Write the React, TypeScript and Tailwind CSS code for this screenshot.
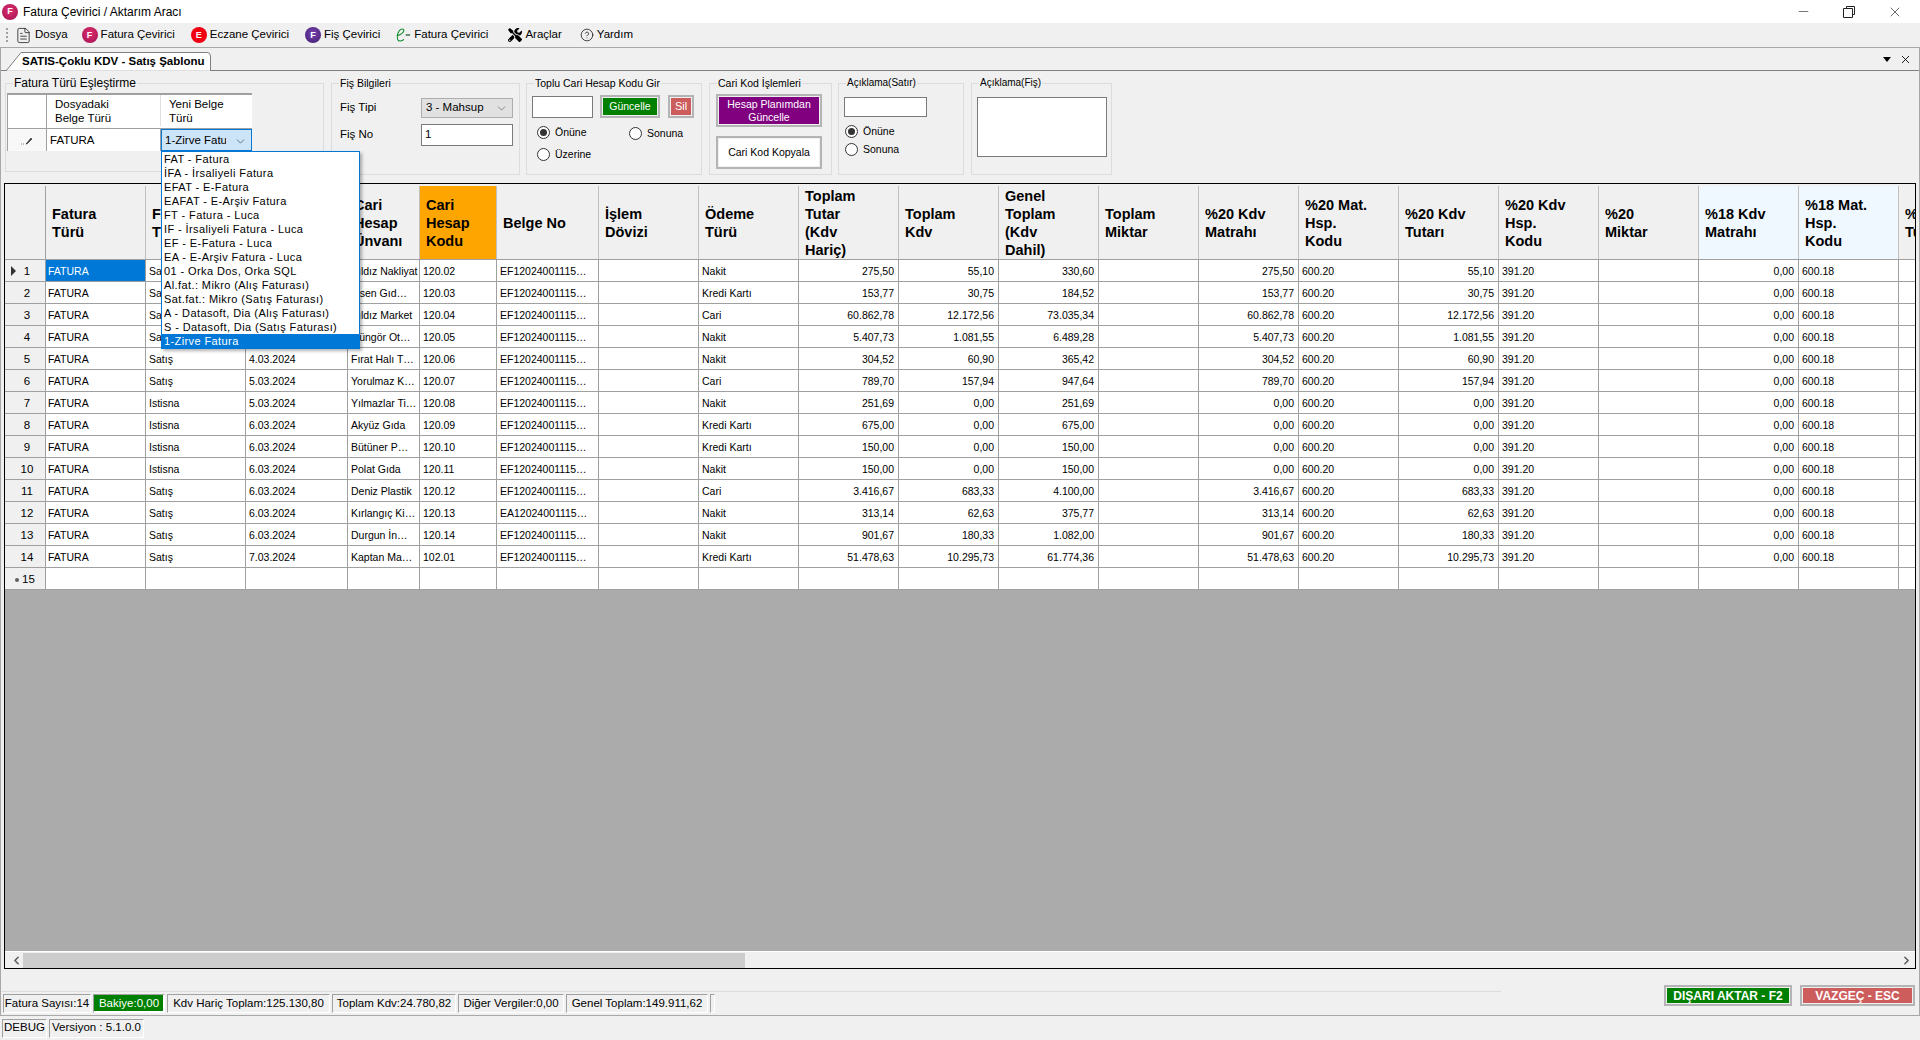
import React from "react";
import { FileText, CircleHelp, ChevronDown, ChevronLeft, ChevronRight, Minus, X } from "lucide-react";
import { FaTools } from "react-icons/fa";

const comboItems = [
  "FAT - Fatura",
  "İFA - İrsaliyeli Fatura",
  "EFAT - E-Fatura",
  "EAFAT - E-Arşiv Fatura",
  "FT - Fatura - Luca",
  "IF - İrsaliyeli Fatura - Luca",
  "EF - E-Fatura - Luca",
  "EA - E-Arşiv Fatura - Luca",
  "01 - Orka Dos, Orka SQL",
  "Al.fat.: Mikro (Alış Faturası)",
  "Sat.fat.: Mikro (Satış Faturası)",
  "A - Datasoft, Dia (Alış Faturası)",
  "S - Datasoft, Dia (Satış Faturası)",
  "1-Zirve Fatura",
];

const columns = [
  { w: "w-[100px]", title: ["Fatura", "Türü"] },
  { w: "w-[100px]", title: ["Fatura", "Tipi"] },
  { w: "w-[102px]", title: ["Fatura", "Tarihi"] },
  { w: "w-[72px]", title: ["Cari", "Hesap", "Ünvanı"] },
  { w: "w-[77px]", title: ["Cari", "Hesap", "Kodu"], bg: "bg-[#ffa500]" },
  { w: "w-[102px]", title: ["Belge No"] },
  { w: "w-[100px]", title: ["İşlem", "Dövizi"] },
  { w: "w-[100px]", title: ["Ödeme", "Türü"] },
  { w: "w-[100px]", title: ["Toplam", "Tutar", "(Kdv", "Hariç)"] },
  { w: "w-[100px]", title: ["Toplam", "Kdv"] },
  { w: "w-[100px]", title: ["Genel", "Toplam", "(Kdv", "Dahil)"] },
  { w: "w-[100px]", title: ["Toplam", "Miktar"] },
  { w: "w-[100px]", title: ["%20 Kdv", "Matrahı"] },
  { w: "w-[100px]", title: ["%20 Mat.", "Hsp.", "Kodu"] },
  { w: "w-[100px]", title: ["%20 Kdv", "Tutarı"] },
  { w: "w-[100px]", title: ["%20 Kdv", "Hsp.", "Kodu"] },
  { w: "w-[100px]", title: ["%20", "Miktar"] },
  { w: "w-[100px]", title: ["%18 Kdv", "Matrahı"], bg: "bg-[#f0f8ff]" },
  { w: "w-[100px]", title: ["%18 Mat.", "Hsp.", "Kodu"], bg: "bg-[#f0f8ff]" },
  { w: "w-[100px]", title: ["%18 Kdv", "Tutarı"] },
];

// tip, tarih, unvan, kod, belge, odeme, tutar, kdv, genel, matrah
const rows = [
  ["Satış", "1.03.2024", "Yıldız Nakliyat", "120.02", "EF12024001115…", "Nakit", "275,50", "55,10", "330,60", "275,50"],
  ["Satış", "1.03.2024", "Ihsen Gıd…", "120.03", "EF12024001115…", "Kredi Kartı", "153,77", "30,75", "184,52", "153,77"],
  ["Satış", "2.03.2024", "Yıldız Market", "120.04", "EF12024001115…", "Cari", "60.862,78", "12.172,56", "73.035,34", "60.862,78"],
  ["Satış", "4.03.2024", "Güngör Ot…", "120.05", "EF12024001115…", "Nakit", "5.407,73", "1.081,55", "6.489,28", "5.407,73"],
  ["Satış", "4.03.2024", "Fırat Halı T…", "120.06", "EF12024001115…", "Nakit", "304,52", "60,90", "365,42", "304,52"],
  ["Satış", "5.03.2024", "Yorulmaz K…", "120.07", "EF12024001115…", "Cari", "789,70", "157,94", "947,64", "789,70"],
  ["Istisna", "5.03.2024", "Yılmazlar Ti…", "120.08", "EF12024001115…", "Nakit", "251,69", "0,00", "251,69", "0,00"],
  ["Istisna", "6.03.2024", "Akyüz Gıda", "120.09", "EF12024001115…", "Kredi Kartı", "675,00", "0,00", "675,00", "0,00"],
  ["Istisna", "6.03.2024", "Bütüner P…", "120.10", "EF12024001115…", "Kredi Kartı", "150,00", "0,00", "150,00", "0,00"],
  ["Istisna", "6.03.2024", "Polat Gıda", "120.11", "EF12024001115…", "Nakit", "150,00", "0,00", "150,00", "0,00"],
  ["Satış", "6.03.2024", "Deniz Plastik", "120.12", "EF12024001115…", "Cari", "3.416,67", "683,33", "4.100,00", "3.416,67"],
  ["Satış", "6.03.2024", "Kırlangıç Ki…", "120.13", "EA12024001115…", "Nakit", "313,14", "62,63", "375,77", "313,14"],
  ["Satış", "6.03.2024", "Durgun İn…", "120.14", "EF12024001115…", "Nakit", "901,67", "180,33", "1.082,00", "901,67"],
  ["Satış", "7.03.2024", "Kaptan Ma…", "102.01", "EF12024001115…", "Kredi Kartı", "51.478,63", "10.295,73", "61.774,36", "51.478,63"],
];

function Badge({ letter, color }: { letter: string; color: string }) {
  return (
    <span className={`flex h-[16px] w-[16px] items-center justify-center rounded-full text-[9px] font-bold leading-none text-white ${color}`}>
      {letter}
    </span>
  );
}

function MenuItem({ icon, label, className }: { icon: React.ReactNode; label: string; className: string }) {
  return (
    <div className={`flex items-center ${className}`}>
      {icon}
      <span className="ml-[3px]">{label}</span>
    </div>
  );
}

function Radio({ label, checked, className = "" }: { label: string; checked?: boolean; className?: string }) {
  return (
    <div className={`flex items-center gap-[5px] text-[10.5px] ${className}`}>
      <span className="flex h-[13px] w-[13px] items-center justify-center rounded-full border border-[#333333] bg-white">
        {checked && <span className="h-[7px] w-[7px] rounded-full bg-[#333333]" />}
      </span>
      {label}
    </div>
  );
}

function Group({ title, className, legend = "", inner, children }: { title: string; className: string; legend?: string; inner: string; children: React.ReactNode }) {
  return (
    <fieldset className={`border border-[#dcdcdc] ${className}`}>
      <legend className={`ml-[7px] px-[1px] leading-[14px] ${legend || "text-[10.5px]"}`}>{title}</legend>
      <div className={inner}>{children}</div>
    </fieldset>
  );
}

function FlatButton({ fill, className, children }: { fill: string; className: string; children: React.ReactNode }) {
  return (
    <div className={`border-2 border-[#b4b4b4] p-[1px] ${className}`}>
      <div className={`flex h-full items-center justify-center text-center ${fill}`}>{children}</div>
    </div>
  );
}

function StatusItem({ className = "", children }: { className?: string; children?: React.ReactNode }) {
  return (
    <div className={`flex h-[19px] items-center justify-center whitespace-nowrap border border-[#ffffff] border-l-[#a0a0a0] border-t-[#a0a0a0] text-[11.5px] ${className}`}>
      {children}
    </div>
  );
}

function TopSection() {
  return (
    <div className="flex h-[112px] items-start pl-[4px] pt-[5px]">
      <Group title="Fatura Türü Eşleştirme" legend="text-[12px] -ml-[1px]" className="h-[96px] w-[319px]" inner="pl-[1px]">
        <div className="mt-[3px] w-[245px] border-l border-t-2 border-[#a0a0a0] text-[11.5px]">
          <div className="flex h-[33px] bg-white pb-[2px]">
            <div className="-mb-[2px] w-[39px] border-r border-[#a0a0a0]" />
            <div className="flex w-[114px] items-center border-r border-[#e0e0e0] pl-[8px] leading-[14px]">
              Dosyadaki<br />Belge Türü
            </div>
            <div className="flex flex-1 items-center pl-[8px] leading-[14px]">
              Yeni Belge<br />Türü
            </div>
          </div>
          <div className="flex h-[23px] border-t border-[#a0a0a0]">
            <div className="flex w-[39px] items-center justify-center border-r border-[#a0a0a0] bg-[#f8f8f8]">
              <svg width="12" height="9" viewBox="0 0 12 9" className="text-[#333333]">
                <path d="M0 8h1M2 8h1M5 8 L10 2 L11 3 L6 8 Z" fill="currentColor" stroke="currentColor" strokeWidth="0.6" />
              </svg>
            </div>
            <div className="flex w-[114px] items-center border-r border-[#a0a0a0] bg-white pl-[3px] pt-[2px]">FATURA</div>
            <div className="flex flex-1 items-center justify-between border border-[#0078d7] bg-[#cce4f7] pl-[3px] pr-[4px] pt-[2px]">
              <span className="w-[61px] overflow-hidden whitespace-nowrap">1-Zirve Fatura</span>
              <ChevronDown size={13} strokeWidth={1.2} className="text-[#333333]" />
            </div>
          </div>
        </div>
      </Group>

      <Group title="Fiş Bilgileri" className="ml-[7px] h-[99px] w-[189px]" inner="pl-[8px]">
        <div className="mt-[8px] flex h-[20px] items-center text-[11.5px]">
          <span className="w-[81px]">Fiş Tipi</span>
          <div className="flex h-[20px] w-[92px] items-center justify-between border border-[#adadad] bg-[#e1e1e1] pl-[4px] pr-[4px]">
            3 - Mahsup
            <ChevronDown size={13} strokeWidth={1.2} className="text-[#555555]" />
          </div>
        </div>
        <div className="mt-[6px] flex h-[22px] items-center text-[11.5px]">
          <span className="w-[81px]">Fiş No</span>
          <div className="flex h-[22px] w-[92px] items-center border border-[#7a7a7a] bg-white pl-[3px]">1</div>
        </div>
      </Group>

      <Group title="Toplu Cari Hesap Kodu Gir" className="ml-[6px] h-[99px] w-[176px]" inner="pl-[5px]">
        <div className="mt-[5px] flex items-center">
          <div className="h-[22px] w-[61px] border border-[#7a7a7a] bg-white" />
          <FlatButton fill="bg-[#008000] text-white" className="ml-[7px] h-[23px] w-[60px] text-[10.5px]">Güncelle</FlatButton>
          <FlatButton fill="bg-[#cd5c5c] text-white" className="ml-[8px] h-[23px] w-[26px] text-[11px]">Sil</FlatButton>
        </div>
        <div className="mt-[6px] flex pl-[5px]">
          <Radio label="Önüne" checked className="w-[92px]" />
          <Radio label="Sonuna" className="mt-[2px]" />
        </div>
        <Radio label="Üzerine" className="ml-[5px] mt-[5px]" />
      </Group>

      <Group title="Cari Kod İşlemleri" className="ml-[7px] h-[99px] w-[123px]" inner="pl-[6px]">
        <FlatButton fill="bg-[#800080] text-white" className="mt-[4px] h-[33px] w-[106px] text-[10.5px] leading-[13px]">
          Hesap Planımdan<br />Güncelle
        </FlatButton>
        <FlatButton fill="bg-white" className="mt-[9px] h-[33px] w-[106px] text-[10.5px]">Cari Kod Kopyala</FlatButton>
      </Group>

      <Group title="Açıklama(Satır)" legend="text-[10px]" className="ml-[6px] h-[99px] w-[126px]" inner="pl-[5px]">
        <div className="mt-[7px] h-[20px] w-[83px] border border-[#7a7a7a] bg-white" />
        <Radio label="Önüne" checked className="ml-[1px] mt-[7px]" />
        <Radio label="Sonuna" className="ml-[1px] mt-[2px]" />
      </Group>

      <Group title="Açıklama(Fiş)" legend="text-[10px]" className="ml-[7px] h-[99px] w-[141px]" inner="pl-[5px]">
        <div className="mt-[7px] h-[60px] w-[130px] border border-[#7a7a7a] bg-white" />
      </Group>
    </div>
  );
}

function DataGrid() {
  return (
    <div className="mx-[3px] flex h-[786px] flex-col border border-black bg-[#ababab]">
      <div className="flex-1 overflow-hidden">
        <table className="w-[1921px] table-fixed border-separate border-spacing-0 bg-white text-[10.5px] font-normal">
          <colgroup>
            <col className="w-[41px]" />
            {columns.map((c, i) => (
              <col key={i} className={c.w} />
            ))}
          </colgroup>
          <thead>
            <tr>
              <th className="h-[76px] border-b border-[#a0a0a0] bg-[#f0f0f0] p-0 align-bottom">
                <div className="h-[73px] border-r border-[#a0a0a0]" />
              </th>
              {columns.map((c, i) => (
                <th key={i} className="h-[76px] border-b border-[#a0a0a0] bg-[#f0f0f0] p-0 align-bottom">
                  <div className={`flex h-[73px] flex-col justify-center overflow-hidden border-r border-[#c0c0c0] pl-[6px] text-left text-[14.5px] font-bold leading-[18px] ${c.bg || ""}`}>
                    {c.title.map((t, j) => (
                      <span key={j} className="whitespace-nowrap">{t}</span>
                    ))}
                  </div>
                </th>
              ))}
            </tr>
          </thead>
          <tbody>
            {rows.map((r, i) => (
              <tr key={i}>
                <td className="relative h-[22px] border-b border-r border-[#a0a0a0] bg-[#f0f0f0] p-0 pt-[2px] text-center text-[11.5px]">
                  {i === 0 && (
                    <span className="absolute left-[6px] top-[6px] h-0 w-0 border-y-[5px] border-l-[5px] border-y-transparent border-l-[#333333]" />
                  )}
                  <span className="pl-[4px]">{i + 1}</span>
                </td>
                <td className={`border-b border-r border-[#a0a0a0] px-[2px] pb-0 pt-[2px] ${i === 0 ? "bg-[#0078d7] text-white" : ""}`}>FATURA</td>
                <Cell>{r[0]}</Cell>
                <Cell>{r[1]}</Cell>
                <Cell>{r[2]}</Cell>
                <Cell>{r[3]}</Cell>
                <Cell>{r[4]}</Cell>
                <Cell />
                <Cell>{r[5]}</Cell>
                <Cell num>{r[6]}</Cell>
                <Cell num>{r[7]}</Cell>
                <Cell num>{r[8]}</Cell>
                <Cell />
                <Cell num>{r[9]}</Cell>
                <Cell>600.20</Cell>
                <Cell num>{r[7]}</Cell>
                <Cell>391.20</Cell>
                <Cell />
                <Cell num>0,00</Cell>
                <Cell>600.18</Cell>
                <Cell />
              </tr>
            ))}
            <tr>
              <td className="h-[22px] border-b border-r border-[#a0a0a0] bg-[#f0f0f0] p-0 pt-[2px] text-center text-[11.5px]">
                <span className="mr-[3px] inline-block h-[4px] w-[4px] rounded-full bg-[#606060] align-middle" />15
              </td>
              {columns.map((c, i) => (
                <Cell key={i} />
              ))}
            </tr>
          </tbody>
        </table>
      </div>
      <div className="flex h-[17px] items-center border-t border-white bg-[#f0f0f0]">
        <ChevronLeft size={13} strokeWidth={3} className="ml-[5px] w-[13px] text-[#606060]" />
        <div className="h-[15px] w-[722px] bg-[#cdcdcd]" />
        <div className="flex-1" />
        <ChevronRight size={13} strokeWidth={3} className="mr-[2px] text-[#606060]" />
      </div>
    </div>
  );
}

function Cell({ num, children }: { num?: boolean; children?: React.ReactNode }) {
  return (
    <td className={`overflow-hidden whitespace-nowrap border-b border-r border-[#a0a0a0] pb-0 pt-[2px] ${num ? "pr-[4px] text-right" : "pl-[3px]"}`}>
      {children}
    </td>
  );
}

export default function App() {
  const pink = "bg-[radial-gradient(circle_at_50%_40%,#e0306f,#a01050)]";
  return (
    <div className="relative flex h-[1040px] w-[1920px] flex-col overflow-hidden bg-[#f0f0f0] font-['Liberation_Sans',sans-serif] text-black">
      {/* Title bar */}
      <div className="flex h-[23px] items-center bg-white pl-[2px] text-[12px]">
        <Badge letter="F" color={pink} />
        <span className="ml-[5px]">Fatura Çevirici / Aktarım Aracı</span>
        <div className="ml-auto flex items-center gap-[32px] pr-[17px] text-[#222222]">
          <Minus size={15} strokeWidth={1} />
          <svg width="12" height="12" viewBox="0 0 12 12" fill="none" stroke="currentColor">
            <path d="M3.5 2.5V.5h8v8h-2M.5 2.5h9v9h-9z" />
          </svg>
          <X size={16} strokeWidth={1} />
        </div>
      </div>

      {/* Menu */}
      <div className="flex h-[24px] items-center text-[11.5px]">
        <div className="ml-[6px] h-[14px] w-[2px] border-l-2 border-dotted border-[#a0a0a0]" />
        <MenuItem className="ml-[7px]" icon={<FileText size={17} strokeWidth={1} />} label="Dosya" />
        <MenuItem className="ml-[14px]" icon={<Badge letter="F" color={pink} />} label="Fatura Çevirici" />
        <MenuItem className="ml-[16px]" icon={<Badge letter="E" color="bg-[#f00010]" />} label="Eczane Çevirici" />
        <MenuItem className="ml-[16px]" icon={<Badge letter="F" color="bg-[radial-gradient(circle_at_50%_40%,#7a3fb0,#3f1f70)]" />} label="Fiş Çevirici" />
        <MenuItem
          className="ml-[15px]"
          icon={
            <svg width="16" height="16" viewBox="0 0 18 16" fill="none">
              <path d="M2 9C6 8 10 5 10 3C10 1 7 .5 5 3C3 6 2 10 3 13C4 15.500 8 15 10 13" stroke="#0a8a2a" strokeWidth="1.200" />
              <path d="M12 8h5" stroke="#1a5a2a" strokeWidth="1.400" />
            </svg>
          }
          label="Fatura Çevirici"
        />
        <MenuItem className="ml-[20px]" icon={<FaTools size={14} />} label="Araçlar" />
        <MenuItem className="ml-[18px]" icon={<CircleHelp size={14} strokeWidth={1.2} />} label="Yardım" />
      </div>

      {/* Document panel */}
      <div className="flex flex-1 flex-col border border-[#a8a8a8]">
        <div className="flex h-[23px] items-end border-b border-[#808080] pl-[5px]">
          <div className="relative -mb-[1px] h-[19px] w-[205px]">
            <svg className="absolute inset-0" width="205" height="19" viewBox="0 0 205 19">
              <path d="M0 19 L15 .5 H201 Q204.500 .5 204.500 4 V19 Z" fill="white" stroke="#808080" />
              <path d="M1 19 H204" stroke="white" />
            </svg>
            <div className="relative ml-[16px] whitespace-nowrap text-[11.5px] font-bold leading-[19px]">SATIS-Çoklu KDV - Satış Şablonu</div>
          </div>
          <div className="ml-auto flex items-center gap-[8px] self-center pr-[7px]">
            <span className="h-0 w-0 border-x-[4px] border-t-[5px] border-x-transparent border-t-black" />
            <X size={13} strokeWidth={1.6} />
          </div>
        </div>

        <TopSection />
        <DataGrid />

        <div className="flex flex-1 items-start">
          <div className="mt-[22px] flex h-[24px] w-[1500px] gap-[2px] border-t border-[#dcdcdc] pl-[2px] pt-[2px]">
            <StatusItem className="w-[88px]">Fatura Sayısı:14</StatusItem>
            <StatusItem className="w-[72px] border-[#008000] bg-[#008000] text-white shadow-[inset_-1px_-1px_0_white]">Bakiye:0,00</StatusItem>
            <StatusItem className="w-[163px]">Kdv Hariç Toplam:125.130,80</StatusItem>
            <StatusItem className="w-[124px]">Toplam Kdv:24.780,82</StatusItem>
            <StatusItem className="w-[106px]">Diğer Vergiler:0,00</StatusItem>
            <StatusItem className="w-[142px]">Genel Toplam:149.911,62</StatusItem>
            <StatusItem className="w-[5px]" />
          </div>
          <FlatButton fill="bg-[#008000] text-white" className="ml-[163px] mt-[16px] h-[21px] w-[128px] text-[12px] font-bold">DIŞARI AKTAR - F2</FlatButton>
          <FlatButton fill="bg-[#cd5c5c] text-white" className="ml-[8px] mt-[16px] h-[21px] w-[115px] text-[12px] font-bold">VAZGEÇ - ESC</FlatButton>
        </div>
      </div>

      {/* Bottom status */}
      <div className="flex h-[24px] items-center gap-[2px] pl-[2px]">
        <StatusItem className="w-[45px]">DEBUG</StatusItem>
        <StatusItem className="w-[95px]">Versiyon : 5.1.0.0</StatusItem>
      </div>

      {/* Open combo list */}
      <div className="absolute left-[161px] top-[151px] w-[199px] border border-[#0078d7] bg-white text-[11px] leading-[14px] shadow-[2px_2px_3px_rgba(0,0,0,0.3)]">
        {comboItems.map((item, i) => (
          <div key={i} className={`h-[14px] whitespace-nowrap pl-[2px] tracking-[0.4px] ${i === 13 ? "bg-[#0078d7] text-white" : ""}`}>
            {item}
          </div>
        ))}
      </div>
    </div>
  );
}
